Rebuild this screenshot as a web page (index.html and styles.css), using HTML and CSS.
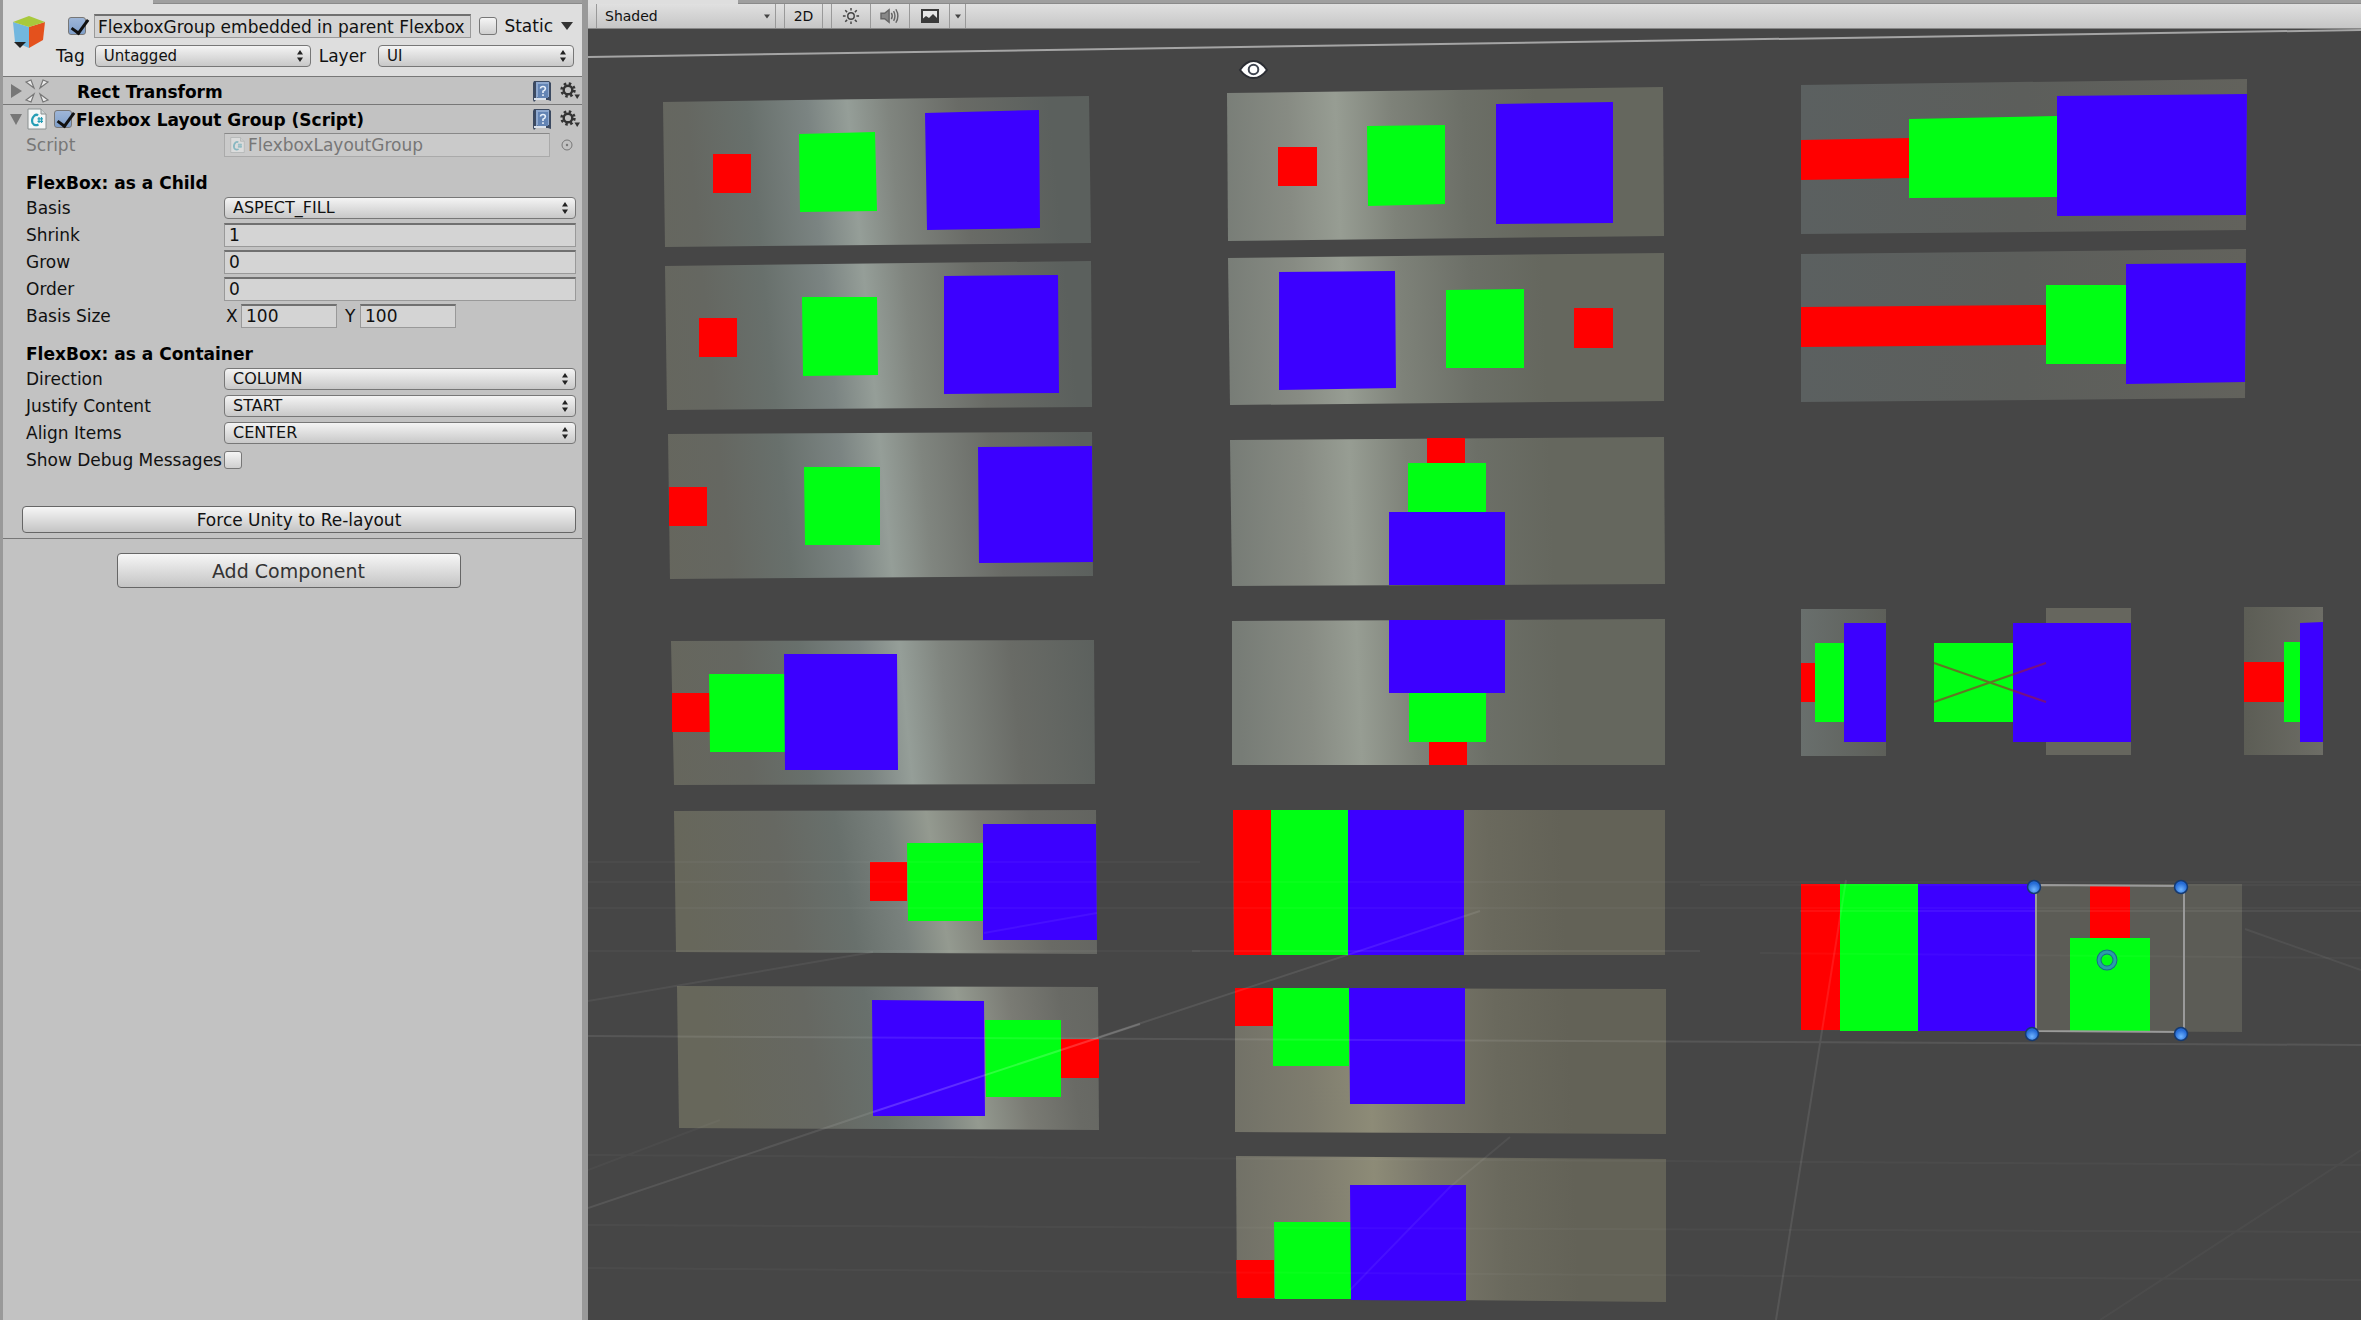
FILE: index.html
```html
<!DOCTYPE html>
<html lang="en">
<head>
<meta charset="utf-8">
<title>Flexbox Layout Group</title>
<link rel="stylesheet" href="styles.css">
</head>
<body>
<svg class="sprites" aria-hidden="true">
  <symbol id="updown" viewBox="0 0 6 12"><path d="M3 0 6 4.6H0zM3 12 0 7.400H6z"/></symbol>
  <symbol id="down" viewBox="0 0 12 8"><path d="M0 0H12L6 8z"/></symbol>
  <symbol id="book" viewBox="0 0 20 22">
    <path d="M2 1H17L19 3V21L16 20H4L2 22 1 20V3z" fill="#3c4a61"/>
    <path d="M4 2H17V17H6L4 19z" fill="#8fa9cf"/><path d="M6 4H16V18H6z" fill="#6384b4"/>
    <path d="M2 18H14V20H2z" fill="#dce3ec"/>
    <path d="M8.500 8.500Q8.600 6.500 11 6.500T13.400 8.700Q13.300 10.300 11 11.300V13M11 14.300V16" fill="none" stroke="#e9f1fb" stroke-width="1.600"/>
  </symbol>
  <symbol id="gear" viewBox="0 0 20 18">
    <circle cx="8" cy="8" r="4.300" fill="none" stroke="#333" stroke-width="2.400"/>
    <circle cx="8" cy="8" r="6.400" fill="none" stroke="#333" stroke-width="2.600" stroke-dasharray="2.500 2.526"/>
    <path d="M14.500 12.500H20L17.200 17z" fill="#333"/>
  </symbol>
  <symbol id="csharp" viewBox="0 0 20 22">
    <path d="M1 1H14L19 6V21H1z" fill="#f5f7f7" stroke="#8a9090"/>
    <path d="M14 1V6H19" fill="#cfd6d6" stroke="#8a9090"/>
    <path d="M11 7.500Q9.500 6 7.500 7.500 4 11 5.500 15 7.500 18.500 11.500 16.500" fill="none" stroke="#259db5" stroke-width="2.200"/>
    <path d="M12 9V15M14.500 9V15M10.500 10.800H16M10.500 13.300H16" stroke="#259db5" stroke-width="1.200"/>
  </symbol>
</svg>

<main class="editor">
<aside class="inspector">
  <div class="tabs"><span class="tab"></span></div>
  <div class="inspector-body">
    <header class="object">
      <svg class="cube" viewBox="0 0 34 34" aria-hidden="true">
        <path d="M1 7 17 12V33L3 27z" fill="#72b7df"/><path d="M17 12 33 7 31 25 17 33z" fill="#e4511d"/>
        <path d="M1 7 17 1 33 7 17 12z" fill="#a8c93c"/><path d="M2 27H14L8 33z" fill="#222"/>
      </svg>
      <div class="object-fields">
        <div class="object-row">
          <input type="checkbox" checked aria-label="Active">
          <input class="name" type="text" value="FlexboxGroup embedded in parent Flexbox" aria-label="Name">
          <label class="static"><input type="checkbox">Static</label>
          <svg class="drop"><use href="#down"/></svg>
        </div>
        <div class="object-row tags">
          <label for="tag">Tag</label>
          <span class="select tag"><select id="tag"><option>Untagged</option></select><svg><use href="#updown"/></svg></span>
          <label for="layer">Layer</label>
          <span class="select layer"><select id="layer"><option>UI</option></select><svg><use href="#updown"/></svg></span>
        </div>
      </div>
    </header>

    <section class="component">
      <h2 class="title">
        <svg class="fold" viewBox="0 0 12 14"><path d="M1 0 12 7 1 14z"/></svg>
        <svg class="kind" viewBox="0 0 24 24" fill="#ececec" stroke="#777" stroke-width="1.200"><path d="M1 3 6 1 9 9zM23 3 18 1 15 9zM1 21 6 23 9 15zM23 21 18 23 15 15z"/></svg>
        <span class="caption">Rect Transform</span>
        <svg class="book"><use href="#book"/></svg><svg class="gear"><use href="#gear"/></svg>
      </h2>
    </section>

    <section class="component">
      <h2 class="title">
        <svg class="fold" viewBox="0 0 12 14"><path d="M0 2H12L6 13z"/></svg>
        <svg class="script-icon"><use href="#csharp"/></svg>
        <input type="checkbox" checked aria-label="Enabled">
        <span class="caption near">Flexbox Layout Group (Script)</span>
        <svg class="book"><use href="#book"/></svg><svg class="gear"><use href="#gear"/></svg>
      </h2>
      <div class="fields">
        <div class="row muted"><span class="label">Script</span><span class="object-ref"><svg><use href="#csharp"/></svg>FlexboxLayoutGroup</span>
          <svg class="pick" viewBox="0 0 12 12"><circle cx="6" cy="6" r="5" fill="none" stroke="#777"/><circle cx="6" cy="6" r="1.200"/></svg></div>
        <h3>FlexBox: as a Child</h3>
        <div class="row"><label class="label" for="basis">Basis</label><span class="select"><select id="basis"><option>ASPECT_FILL</option></select><svg><use href="#updown"/></svg></span></div>
        <div class="row"><label class="label" for="shrink">Shrink</label><input id="shrink" type="text" value="1"></div>
        <div class="row"><label class="label" for="grow">Grow</label><input id="grow" type="text" value="0"></div>
        <div class="row"><label class="label" for="order">Order</label><input id="order" type="text" value="0"></div>
        <div class="row vector"><span class="label">Basis Size</span><label for="sx">X</label><input id="sx" type="text" value="100"><label for="sy">Y</label><input id="sy" type="text" value="100"></div>
        <h3>FlexBox: as a Container</h3>
        <div class="row"><label class="label" for="direction">Direction</label><span class="select"><select id="direction"><option>COLUMN</option></select><svg><use href="#updown"/></svg></span></div>
        <div class="row"><label class="label" for="justify">Justify Content</label><span class="select"><select id="justify"><option>START</option></select><svg><use href="#updown"/></svg></span></div>
        <div class="row"><label class="label" for="align">Align Items</label><span class="select"><select id="align"><option>CENTER</option></select><svg><use href="#updown"/></svg></span></div>
        <div class="row"><label class="label" for="debug">Show Debug Messages</label><input id="debug" type="checkbox"></div>
        <button class="relayout" type="button">Force Unity to Re-layout</button>
      </div>
    </section>
    <button class="add" type="button">Add Component</button>
  </div>
</aside>

<section class="scene">
  <div class="tabs"><span class="tab"></span></div>
  <div class="toolbar">
    <button class="shading" type="button">Shaded<svg><use href="#down"/></svg></button>
    <button class="mode" type="button">2D</button>
    <button class="light" type="button" aria-label="Lighting"><svg viewBox="0 0 20 20" fill="none" stroke="#444" stroke-width="1.600"><circle cx="10" cy="10" r="3.600"/><path d="M10 1V4M10 16V19M1 10H4M16 10H19M3.600 3.600 5.700 5.700M14.300 14.300 16.400 16.400M3.600 16.400 5.700 14.300M14.300 5.700 16.400 3.600"/></svg></button>
    <button class="audio" type="button" aria-label="Audio"><svg viewBox="0 0 22 20" fill="none" stroke="#666" stroke-width="1.600"><path d="M1 7H5L10 3V17L5 13H1z" fill="#888"/><path d="M12.500 6.500Q14.500 10 12.500 13.500M15 4.500Q18 10 15 15.500M17.500 2.500Q22 10 17.500 17.500"/></svg></button>
    <button class="effects" type="button" aria-label="Effects"><svg viewBox="0 0 20 16"><path d="M1 1H19V15H1z" fill="#3a3a3a"/><path d="M3 3H17V10L13 6 9 10 6 8 3 10.500z" fill="#e6e6e6"/></svg></button>
    <button class="more" type="button" aria-label="Effects menu"><svg><use href="#down"/></svg></button>
  </div>
  <svg class="view" viewBox="588 29 1773 1291" preserveAspectRatio="xMinYMin meet" role="img" aria-label="Scene">
    <defs>
      <linearGradient id="ga" gradientUnits="userSpaceOnUse" x1="597" y1="124" x2="1097" y2="76">
        <stop offset="0" stop-color="#66665c"/><stop offset=".18" stop-color="#656761"/><stop offset=".3" stop-color="#68706c"/><stop offset=".42" stop-color="#7b8482"/><stop offset=".5" stop-color="#959e98"/><stop offset=".58" stop-color="#80857f"/><stop offset=".72" stop-color="#696b66"/><stop offset=".9" stop-color="#5b605d"/>
      </linearGradient>
      <linearGradient id="gl" gradientUnits="userSpaceOnUse" x1="676" y1="853" x2="1176" y2="769">
        <stop offset="0" stop-color="#67675b"/><stop offset=".2" stop-color="#666862"/><stop offset=".32" stop-color="#68706c"/><stop offset=".42" stop-color="#79817d"/><stop offset=".5" stop-color="#949a90"/><stop offset=".6" stop-color="#7a7b74"/><stop offset=".7" stop-color="#696a65"/><stop offset=".9" stop-color="#5f615d"/>
      </linearGradient>
      <linearGradient id="gb" gradientUnits="userSpaceOnUse" x1="1135" y1="101" x2="1535" y2="85">
        <stop offset=".2" stop-color="#777c76"/><stop offset=".38" stop-color="#878b83"/><stop offset=".5" stop-color="#979d93"/><stop offset=".64" stop-color="#7e8279"/><stop offset=".82" stop-color="#6c6f67"/><stop offset="1" stop-color="#65675e"/>
      </linearGradient>
      <linearGradient id="gw" gradientUnits="userSpaceOnUse" x1="1131" y1="101" x2="1531" y2="85">
        <stop offset=".1" stop-color="#6e6e65"/><stop offset=".35" stop-color="#7e7c6e"/><stop offset=".5" stop-color="#8d8b77"/><stop offset=".64" stop-color="#79776a"/><stop offset=".82" stop-color="#6a695d"/><stop offset="1" stop-color="#636257"/>
      </linearGradient>
      <linearGradient id="gc"><stop stop-color="#5b6060"/><stop offset=".5" stop-color="#5c5e5b"/><stop offset="1" stop-color="#62625c"/></linearGradient>
      <linearGradient id="gd"><stop stop-color="#696f6d"/><stop offset="1" stop-color="#5d5f59"/></linearGradient>
      <linearGradient id="ge"><stop stop-color="#5c5d55"/><stop offset="1" stop-color="#6d6d66"/></linearGradient>
      <radialGradient id="dot" cy=".7"><stop stop-color="#6fb4ff"/><stop offset="1" stop-color="#256bd6"/></radialGradient>
    </defs>
    <path d="M588 57 2361 30" stroke="#a5a5a5" stroke-width="2"/>

    <g fill="url(#ga)">
      <path d="M663 102 1089 96 1091 243 665 247z"/><path d="M665 266 1091 261 1092 407 667 410z"/>
      <path d="M668 434 1092 432 1093 576 670 579z"/><path d="M671 641 1094 640 1095 784 674 785z"/>
    </g>
    <g fill="url(#gl)">
      <path d="M674 811 1096 810 1097 954 676 952z"/><path d="M677 986 1098 987 1099 1130 679 1128z"/>
    </g>
    <g fill="url(#gb)">
      <path d="M1227 93 1663 87 1664 236 1228 241z"/><path d="M1228 258 1664 253V401L1230 405z"/>
      <path d="M1230 440 1664 437 1665 584 1232 586z"/><path d="M1232 621 1665 619V765H1232z"/>
    </g>
    <g fill="url(#gw)">
      <path d="M1233 810H1665V955H1234z"/><path d="M1235 988 1666 989V1134L1235 1132z"/><path d="M1236 1156 1666 1159V1302L1237 1298z"/>
    </g>
    <path fill="url(#gc)" d="M1801 85 2247 79 2246 230 1801 234z"/>
    <path fill="url(#gc)" d="M1801 254 2246 249 2245 398 1801 402z"/>
    <path fill="url(#gd)" d="M1801 609H1886V756H1801z"/><path fill="#66665e" d="M2046 608H2131V755H2046z"/><path fill="url(#ge)" d="M2244 607H2323V755H2244z"/>
    <path fill="#5c5c56" d="M1801 884H2242V1032L1801 1030z"/>

    <g fill="#f00">
      <path d="M713 154H751V193H713zM699 318H737V357H699zM669 487H707V526H669zM672 693H710V732H672zM870 862H907V901H870zM1061 1039H1099V1078H1061z"/>
      <path d="M1278 147H1317V186H1278zM1574 308H1613V348H1574zM1427 438H1465V463H1427zM1429 741H1467V765H1429zM1233 810H1271V955H1234zM1235 988H1273V1026H1235zM1236 1260H1274V1298H1237z"/>
      <path d="M1801 140 1909 138V178L1801 180zM1801 307 2046 305V345L1801 347zM1801 663H1815V702H1801zM2244 662H2284V702H2244zM1801 884H1840V1030H1801zM2090 885H2130V938H2090z"/>
    </g>
    <g fill="#00ff14">
      <path d="M799 134 875 132 877 211 800 212zM802 297H877L878 375 803 376zM804 467H880V545H805zM709 674H785V752H710zM907 843H983V921H908zM985 1020H1061V1097H986z"/>
      <path d="M1367 126 1445 125V204L1368 206zM1446 290 1524 289V368H1446zM1408 463H1486V512H1408zM1409 693H1486V742H1409zM1271 810H1348V955H1272zM1273 988H1349V1066H1273zM1274 1222H1351V1299H1275z"/>
      <path d="M1909 119 2057 116V197L1909 198zM2046 285H2126V364H2046zM1815 643H1844V722H1815zM1934 643H2013V722H1934zM2284 642H2300V722H2284zM1840 884H1918V1031H1840zM2070 938H2150V1032H2070z"/>
    </g>
    <g fill="#3c00ff">
      <path d="M925 113 1039 110 1040 228 927 230zM944 276 1058 275 1059 393 944 394zM978 447 1092 446 1093 562 979 563zM784 654H897L898 770H785zM983 824H1096L1097 940H983zM872 1000 984 1001 985 1116H873z"/>
      <path d="M1496 104 1613 102V223L1496 224zM1279 272 1395 271 1396 388 1279 390zM1389 512H1505V585H1389zM1389 620H1505V693H1389zM1348 810H1464V955H1348zM1349 988H1465V1104H1350zM1350 1185H1466V1301L1351 1300z"/>
      <path d="M2057 96 2247 94 2246 215 2057 216zM2126 264 2246 263 2245 382 2126 384zM1844 623H1886V742H1844zM2013 623H2131V742H2013zM2300 623 2323 622V742H2300zM1918 884H2036V1031H1918z"/>
    </g>

    <g stroke="#fff" fill="none" stroke-width="2">
      <path opacity=".09" d="M588 1036 2361 1045M588 1208 873 1112M1099 1037 1480 911M1776 1320 1846 880"/>
      <path opacity=".18" d="M873 1112 1140 1024"/>
      <path opacity=".06" d="M588 1001 873 952M984 933 1097 913M1350 1290 1450 1187 1510 1137M2245 929 2361 970M1192 951H1700M1800 911H2361"/>
      <path opacity=".03" d="M588 908H2361M588 882H2361M588 951H1200M588 1155 2361 1165M588 1225 2361 1232M588 1268 2361 1280M588 862H1200M1700 885H2361M1760 953 2361 958M588 1170 720 1120M2361 1150 2100 1320"/>
    </g>
    <path d="M1934 663 2046 702M1934 702 2046 663" stroke="#a01c30" stroke-width="2" opacity=".6"/>
    <path d="M2036 885 2184 886V1032L2036 1031z" fill="none" stroke="#9a9a9a" stroke-width="2"/>
    <g fill="url(#dot)" stroke="#163a70" stroke-width="1.500"><circle cx="2034" cy="887" r="6.500"/><circle cx="2181" cy="887" r="6.500"/><circle cx="2032" cy="1034" r="6.500"/><circle cx="2181" cy="1034" r="6.500"/></g>
    <g fill="none"><circle cx="2107" cy="960" r="8" stroke="#17698a" stroke-width="5"/><circle cx="2107" cy="960" r="8" stroke="#2b9ca8" stroke-width="3"/></g>
    <g stroke="#2b2d33" stroke-width="2"><path d="M1240 70Q1246 61 1253.500 61T1267 70Q1261 78 1253.500 78T1240 70z" fill="#fff"/><circle cx="1253.500" cy="69.500" r="4.800" fill="#fff" stroke="#3e4450"/></g>
  </svg>
</section>
</main>
</body>
</html>
```
FILE: styles.css
```css
* { box-sizing: border-box; }
body {
  margin: 0;
  background: #464646;
  color: #111;
  font: 17px/20px "DejaVu Sans", sans-serif;
}
svg { display: block; flex: none; }
input, select, button { font: inherit; color: inherit; margin: 0; }
.sprites { position: absolute; width: 0; height: 0; }
.editor { display: grid; grid-template-columns: 588px minmax(0, 1fr); min-height: 100vh; }

.tabs { height: 4px; display: flex; background: #9f9f9f; border-bottom: 1px solid #8a8a8a; }
.tab { width: 150px; height: 4px; background: #dedede; }

/* Inspector */
.inspector { background: #c2c2c2; border-left: 3px solid #999; border-right: 6px solid #999; }
.inspector-body { display: flex; flex-direction: column; }
.object {
  display: flex;
  height: 73px;
  gap: 9px;
  padding: 10px 8px 0 9px;
  background: #dedede;
  border-bottom: 1px solid #777;
}
.cube { width: 34px; height: 34px; margin-top: 1px; }
.object-fields { flex: 1; display: flex; flex-direction: column; gap: 6px; }
.object-row { display: flex; align-items: center; height: 24px; padding-left: 13px; }
.object-row .name { flex: 1; margin: 0 8px; padding: 0 0 0 3px; }
.static { display: flex; align-items: center; gap: 7px; }
.drop { width: 12px; height: 8px; margin: 0 1px 0 8px; fill: #333; }
.tags { padding-left: 1px; gap: 8px; }
.tag { flex: 216; margin-left: 2px; }
.layer { flex: 196; margin-left: 4px; }

input[type="checkbox"] {
  appearance: none;
  flex: none;
  width: 18px;
  height: 18px;
  border: 1px solid #777;
  border-radius: 3px;
  background: linear-gradient(#f5f5f5, #cfcfcf);
}
input[type="checkbox"]:checked { position: relative; background: linear-gradient(#9eb6d8, #7f9fca); }
input[type="checkbox"]:checked::after {
  content: "";
  position: absolute;
  left: 6px;
  top: -2px;
  width: 7px;
  height: 15px;
  border: solid #111;
  border-width: 0 3px 3px 0;
  transform: rotate(36deg);
}
input[type="text"] {
  min-width: 0;
  height: 24px;
  padding: 0 4px;
  border: 1px solid #999;
  border-top: 2px solid #707070;
  background: #d4d4d4;
}
.select { position: relative; display: flex; height: 22px; min-width: 0; }
.select select {
  appearance: none;
  width: 100%;
  padding: 0 8px;
  border: 1px solid #777;
  border-radius: 4px;
  background: linear-gradient(#f4f4f4, #c8c8c8);
  font-size: 16px;
  line-height: 20px;
}
.tags select { font-size: 15px; }
.select svg { position: absolute; right: 8px; top: 5px; width: 6px; height: 12px; fill: #222; pointer-events: none; }

.component { border-bottom: 1px solid #777; }
.title { display: flex; align-items: center; height: 27px; margin: 0; padding: 1px 2px 0 7px; font-size: 17px; font-weight: bold; color: #000; }
.fold { width: 12px; height: 14px; fill: #777; margin-right: 3px; }
.kind { width: 24px; height: 24px; margin-right: 28px; }
.script-icon { width: 20px; height: 22px; margin: 0 7px 0 2px; }
.caption { flex: 1; padding-top: 1px; }
.near { margin-left: 4px; }
.book { width: 20px; height: 22px; margin-right: 8px; }
.gear { width: 20px; height: 18px; }

.fields { display: flex; flex-direction: column; margin-top: -1px; padding: 0 6px 5px 23px; }
.row { display: flex; align-items: center; height: 27px; }
.label { width: 198px; white-space: nowrap; }
.row .select, .row > input[type="text"] { flex: 1; }
.fields h3 { margin: 15px 0 0; height: 21px; font-size: 17px; color: #000; }
.muted { color: #777; }
.object-ref { flex: 1; display: flex; align-items: center; gap: 3px; height: 24px; padding-left: 5px; border: 1px solid #aaa; border-top-color: #888; background: #cacaca; }
.object-ref svg { width: 15px; height: 18px; opacity: .4; }
.pick { width: 12px; height: 12px; margin: 0 3px 0 11px; fill: #777; }
.vector label { width: 17px; padding-left: 2px; }
.row.vector > input { flex: 0 0 96px; margin-right: 6px; }

button {
  border: 1px solid #666;
  border-radius: 4px;
  background: linear-gradient(#f6f6f6, #c4c4c4);
  padding: 0;
}
.relayout { height: 27px; margin: 33px 0 0 -4px; }
.add { align-self: center; width: 344px; height: 35px; margin: 14px 8px 0 0; font-size: 19px; color: #333; }

/* Scene */
.scene { display: flex; flex-direction: column; min-width: 0; }
.toolbar { display: flex; height: 25px; padding-left: 8px; background: linear-gradient(#e0e0e0, #c6c6c6); border-bottom: 1px solid #888; }
.toolbar button { display: flex; align-items: center; justify-content: center; border: solid #999; border-width: 0 1px; border-radius: 0; background: none; font-size: 14px; }
.toolbar .shading { width: 180px; padding: 0 5px 0 8px; justify-content: space-between; }
.shading svg, .more svg { width: 6px; height: 5px; fill: #444; }
.toolbar .mode { width: 39px; margin: 0 8px; }
.toolbar .light, .toolbar .audio { width: 39px; border-right-width: 0; }
.light svg { width: 18px; height: 18px; }
.audio svg { width: 22px; height: 18px; }
.toolbar .effects { width: 40px; border-right-width: 0; }
.effects svg { width: 20px; height: 16px; }
.toolbar .more { width: 17px; }
.view { width: 100%; height: auto; }
```
